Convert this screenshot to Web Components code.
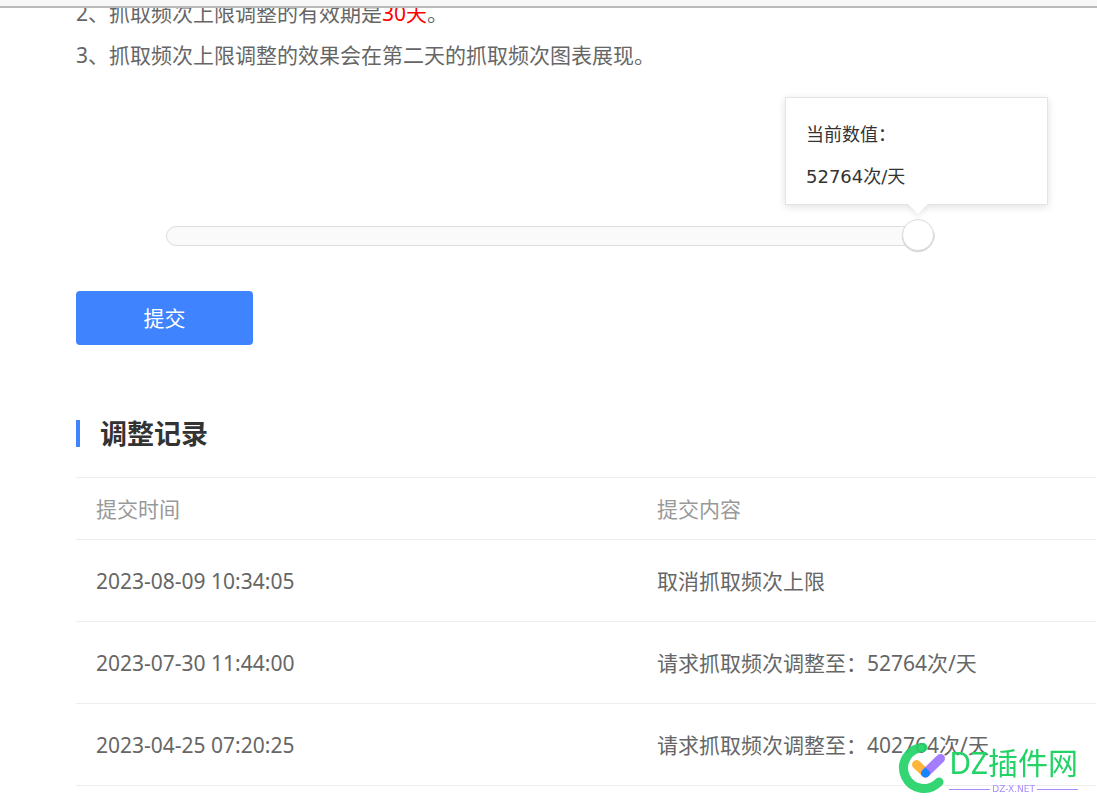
<!DOCTYPE html>
<html lang="zh-CN">
<head>
<meta charset="utf-8">
<meta name="viewport" content="width=device-width, initial-scale=1">
<title>抓取频次</title>
<style>
  body {
    margin: 0;
    background: #fff;
    color: #666;
    font: 21px/42px "Noto Sans", "Noto Sans CJK SC", sans-serif;
  }
  em { color: #f00; font-style: normal; }
</style>
</head>
<body>
<crawl-page>
  <note-list>
    <note-item index="2">抓取频次上限调整的有效期是<em>30天</em>。</note-item>
    <note-item index="3">抓取频次上限调整的效果会在第二天的抓取频次图表展现。</note-item>
  </note-list>
  <rate-slider value="52764" max="52764"></rate-slider>
  <submit-button>提交</submit-button>
  <section-title>调整记录</section-title>
  <record-table></record-table>
</crawl-page>
<site-mark></site-mark>

<script>
class Base extends HTMLElement {
  constructor() {
    super();
    this.attachShadow({ mode: 'open' }).innerHTML = this.view();
  }
}

customElements.define('crawl-page', class extends Base {
  view() {
    return `<style>
      :host { display: block; }
      header { height: 6px; background: #f7f7f7; border-bottom: 2px solid #bbb; }
      main { overflow: hidden; padding: 0 0 23px 76px; }
    </style>
    <header></header><main><slot></slot></main>`;
  }
});

customElements.define('note-list', class extends Base {
  view() {
    return `<style>
      :host { display: block; margin-top: -16px; }
    </style><slot></slot>`;
  }
});

customElements.define('note-item', class extends Base {
  view() {
    return `<style>:host { display: block; }</style>${this.getAttribute('index')}、<slot></slot>`;
  }
});

customElements.define('rate-slider', class extends Base {
  view() {
    const value = this.getAttribute('value');
    const max = this.getAttribute('max');
    return `<style>
      :host { display: block; position: relative; margin: 144px 162px 0 90px; height: 32px; }
      input {
        -webkit-appearance: none; appearance: none;
        display: block; width: 100%; height: 32px; margin: 0; background: none;
      }
      input::-webkit-slider-runnable-track {
        box-sizing: border-box; height: 20px; border: 1px solid #ddd;
        border-radius: 10px; background: #fafafa;
      }
      input::-webkit-slider-thumb {
        -webkit-appearance: none; box-sizing: border-box;
        width: 32px; height: 32px; margin: -8px -1px 0 0;
        border: 1px solid #ddd; border-radius: 50%; background: #fff;
        box-shadow: 0 1px 1px #ccc;
      }
      output {
        position: absolute; right: -113px; bottom: 47px;
        box-sizing: border-box; width: 263px; height: 108px; padding: 16px 20px 0;
        border: 1px solid #e4e4e4; background: #fff; color: #333;
        box-shadow: 0 2px 8px rgba(0,0,0,.12);
        font: 18px/42px "DejaVu Sans", "Noto Sans CJK SC", sans-serif;
      }
      output::after {
        content: ""; position: absolute; left: 125px; bottom: -7px;
        width: 14px; height: 14px; background: #fff; transform: rotate(45deg);
        box-shadow: 3px 3px 5px rgba(0,0,0,.06);
      }
      label, span { display: block; }
    </style>
    <input id="rate" type="range" min="0" max="${max}" value="${value}">
    <output for="rate"><label for="rate">当前数值：</label><span>${value}次/天</span></output>`;
  }
  connectedCallback() {
    const input = this.shadowRoot.querySelector('input');
    const text = this.shadowRoot.querySelector('span');
    input.addEventListener('input', () => { text.textContent = input.value + '次/天'; });
  }
});

customElements.define('submit-button', class extends Base {
  view() {
    return `<style>
      :host { display: block; margin-top: 39px; }
      button {
        display: block; width: 177px; height: 54px; padding: 0; border: 0;
        border-radius: 4px; background: #4083ff; color: #fff; font: inherit; cursor: pointer;
      }
    </style><button type="button"><slot></slot></button>`;
  }
});

customElements.define('section-title', class extends Base {
  view() {
    return `<style>
      :host { display: block; margin-top: 75px; }
      h2 {
        margin: 0; padding-left: 20px; border-left: 4px solid #4083ff;
        color: #333; font-size: 27px; line-height: 27px; font-weight: 700;
      }
    </style><h2><slot></slot></h2>`;
  }
});

customElements.define('record-table', class extends Base {
  view() {
    const rows = [
      ['2023-08-09 10:34:05', '取消抓取频次上限'],
      ['2023-07-30 11:44:00', '请求抓取频次调整至：52764次/天'],
      ['2023-04-25 07:20:25', '请求抓取频次调整至：402764次/天']
    ];
    return `<style>
      :host { display: block; margin: 30px 1px 0 0; }
      table {
        width: 100%; table-layout: fixed; border-spacing: 0;
        border-top: 1px solid #eee; font: inherit; line-height: 21px;
      }
      th, td {
        box-sizing: border-box; padding: 2px 20px 0; border-bottom: 1px solid #eee;
        text-align: left; font-weight: 400;
      }
      th { height: 62px; color: #999; }
      th:first-child { width: 55%; }
      td { height: 82px; }
    </style>
    <table>
      <thead><tr><th scope="col">提交时间</th><th scope="col">提交内容</th></tr></thead>
      <tbody>${rows.map(([t, c]) => `<tr><td>${t}</td><td>${c}</td></tr>`).join('')}</tbody>
    </table>`;
  }
});

customElements.define('site-mark', class extends Base {
  view() {
    return `<style>
      :host {
        position: fixed; right: 19px; bottom: 15px; display: flex; gap: 3px;
        pointer-events: none; color: #22d366;
      }
      svg { display: block; width: 48px; height: 52px; }
      .name { font-size: 30px; line-height: 42px; white-space: nowrap; }
      .site {
        display: flex; align-items: center; gap: 2px; color: #a98bff;
        font: 9px/10px "DejaVu Sans", sans-serif;
      }
      .site::before, .site::after { content: ""; flex: 1; height: 1px; background: currentColor; }
    </style>
    <svg viewBox="0 0 48 52" fill="none" stroke-linecap="round" aria-hidden="true">
      <path d="M25 5.500A20.500 20.500 0 1 0 41 40" stroke="#22d366" stroke-opacity=".92" stroke-width="9"/>
      <path d="M18.500 22.500 27.500 31" stroke="#ffb53b" stroke-width="9"/>
      <path d="M27.500 31 42.500 16.500" stroke="#a47dff" stroke-width="9"/>
      <path d="M27.500 25.500 32 30A4.600 4.600 0 1 1 23 30Z" fill="#1684fc"/>
    </svg>
    <div><div class="name">DZ插件网</div><div class="site">DZ-X.NET</div></div>`;
  }
});
</script>
</body>
</html>
